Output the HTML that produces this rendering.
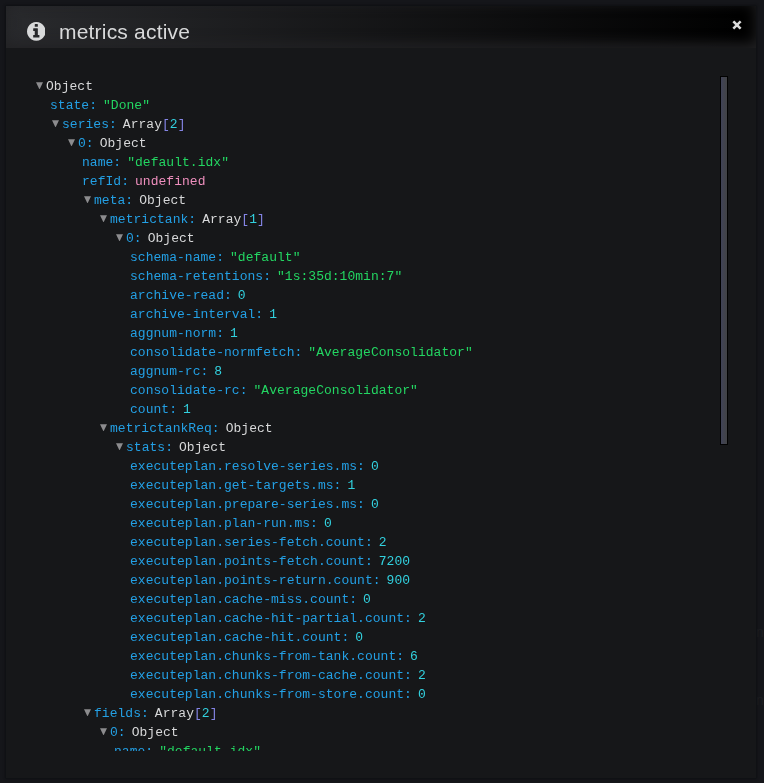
<!DOCTYPE html>
<html><head><meta charset="utf-8"><title>metrics active</title>
<style>
html,body{margin:0;padding:0;overflow:hidden;background:#15161a;}
body{width:764px;height:783px;overflow:hidden;background:#15161a;position:relative;font-family:"Liberation Sans",sans-serif;}
.modal{position:absolute;left:6px;top:6px;width:750px;height:772px;background:#161719;box-shadow:0 0 2px 1px #0e0f12;}
.hdr{position:absolute;left:0;top:0;width:750px;height:42px;background:linear-gradient(90deg,#292a2d,#000);box-shadow:inset 0 -4px 14px #222224;}
.title{will-change:transform;position:absolute;left:53px;top:11.7px;font-size:21px;line-height:28px;letter-spacing:0.2px;color:#d8d9da;white-space:nowrap;}
.icon{position:absolute;left:20.5px;top:16.1px;width:18.6px;height:18.8px;}
.close{position:absolute;left:724.7px;top:12.5px;width:12px;height:12px;}
.json{position:absolute;left:0;top:71px;will-change:transform;width:712px;height:673.6px;overflow:hidden;font-family:"Liberation Mono",monospace;font-size:13px;line-height:19px;color:#d8d9da;letter-spacing:0.03px;}
.r{height:19px;white-space:pre;transform:scaleY(1.035);transform-origin:0 13px;}
.t{display:inline-block;width:7px;height:7px;background:#8c8c8e;clip-path:polygon(0 0,100% 0,50% 100%);margin-right:3px;vertical-align:0.6px;}
.k{color:#23a0e5;margin-right:6px;}
.o{color:#d8d9da;}
.s{color:#23d662;}
.n{color:#32d1df;}
.b{color:#8585e6;}
.u{color:#ef8fbe;}
.ghost{position:absolute;left:756px;font-size:14px;line-height:14px;color:#1d1e22;white-space:nowrap;}
.sb{position:absolute;left:714px;top:70px;width:8px;height:369px;background:linear-gradient(90deg,#404357,#424345);border:1px solid #010101;box-sizing:border-box;}
</style></head><body>
<div style="position:absolute;left:0;top:0;width:764px;height:783px;overflow:hidden"><div class="ghost" style="top:625px">ns</div><div class="ghost" style="top:693px">ns</div></div>
<div class="modal">
<div class="hdr">
<svg class="icon" viewBox="128 128 1536 1536"><path fill="#d8d9da" d="M1152 1376v-160q0-14-9-23t-23-9h-96v-512q0-14-9-23t-23-9h-320q-14 0-23 9t-9 23v160q0 14 9 23t23 9h96v320h-96q-14 0-23 9t-9 23v160q0 14 9 23t23 9h448q14 0 23-9t9-23zm-128-896v-160q0-14-9-23t-23-9h-192q-14 0-23 9t-9 23v160q0 14 9 23t23 9h192q14 0 23-9t9-23zm640 416q0 209-103 385.5t-279.5 279.5-385.5 103-385.5-103-279.5-279.5-103-385.5 103-385.5 279.5-279.5 385.5-103 385.5 103 279.5 279.5 103 385.5z"/></svg>
<div class="title">metrics active</div>
<svg class="close" viewBox="0 0 12 12"><path d="M3.2 3.2L8.8 8.8M8.8 3.2L3.2 8.8" stroke="#dcdcdc" stroke-width="2.5" stroke-linecap="square"/></svg>
</div>
<div class="json">
<div class="r" style="padding-left:30px"><i class="t"></i><span class="o">Object</span></div>
<div class="r" style="padding-left:44px"><span class="k">state:</span><span class="s">"Done"</span></div>
<div class="r" style="padding-left:46px"><i class="t"></i><span class="k">series:</span><span class="o">Array</span><span class="b">[</span><span class="n">2</span><span class="b">]</span></div>
<div class="r" style="padding-left:62px"><i class="t"></i><span class="k">0:</span><span class="o">Object</span></div>
<div class="r" style="padding-left:76px"><span class="k">name:</span><span class="s">"default.idx"</span></div>
<div class="r" style="padding-left:76px"><span class="k">refId:</span><span class="u">undefined</span></div>
<div class="r" style="padding-left:78px"><i class="t"></i><span class="k">meta:</span><span class="o">Object</span></div>
<div class="r" style="padding-left:94px"><i class="t"></i><span class="k">metrictank:</span><span class="o">Array</span><span class="b">[</span><span class="n">1</span><span class="b">]</span></div>
<div class="r" style="padding-left:110px"><i class="t"></i><span class="k">0:</span><span class="o">Object</span></div>
<div class="r" style="padding-left:124px"><span class="k">schema-name:</span><span class="s">"default"</span></div>
<div class="r" style="padding-left:124px"><span class="k">schema-retentions:</span><span class="s">"1s:35d:10min:7"</span></div>
<div class="r" style="padding-left:124px"><span class="k">archive-read:</span><span class="n">0</span></div>
<div class="r" style="padding-left:124px"><span class="k">archive-interval:</span><span class="n">1</span></div>
<div class="r" style="padding-left:124px"><span class="k">aggnum-norm:</span><span class="n">1</span></div>
<div class="r" style="padding-left:124px"><span class="k">consolidate-normfetch:</span><span class="s">"AverageConsolidator"</span></div>
<div class="r" style="padding-left:124px"><span class="k">aggnum-rc:</span><span class="n">8</span></div>
<div class="r" style="padding-left:124px"><span class="k">consolidate-rc:</span><span class="s">"AverageConsolidator"</span></div>
<div class="r" style="padding-left:124px"><span class="k">count:</span><span class="n">1</span></div>
<div class="r" style="padding-left:94px"><i class="t"></i><span class="k">metrictankReq:</span><span class="o">Object</span></div>
<div class="r" style="padding-left:110px"><i class="t"></i><span class="k">stats:</span><span class="o">Object</span></div>
<div class="r" style="padding-left:124px"><span class="k">executeplan.resolve-series.ms:</span><span class="n">0</span></div>
<div class="r" style="padding-left:124px"><span class="k">executeplan.get-targets.ms:</span><span class="n">1</span></div>
<div class="r" style="padding-left:124px"><span class="k">executeplan.prepare-series.ms:</span><span class="n">0</span></div>
<div class="r" style="padding-left:124px"><span class="k">executeplan.plan-run.ms:</span><span class="n">0</span></div>
<div class="r" style="padding-left:124px"><span class="k">executeplan.series-fetch.count:</span><span class="n">2</span></div>
<div class="r" style="padding-left:124px"><span class="k">executeplan.points-fetch.count:</span><span class="n">7200</span></div>
<div class="r" style="padding-left:124px"><span class="k">executeplan.points-return.count:</span><span class="n">900</span></div>
<div class="r" style="padding-left:124px"><span class="k">executeplan.cache-miss.count:</span><span class="n">0</span></div>
<div class="r" style="padding-left:124px"><span class="k">executeplan.cache-hit-partial.count:</span><span class="n">2</span></div>
<div class="r" style="padding-left:124px"><span class="k">executeplan.cache-hit.count:</span><span class="n">0</span></div>
<div class="r" style="padding-left:124px"><span class="k">executeplan.chunks-from-tank.count:</span><span class="n">6</span></div>
<div class="r" style="padding-left:124px"><span class="k">executeplan.chunks-from-cache.count:</span><span class="n">2</span></div>
<div class="r" style="padding-left:124px"><span class="k">executeplan.chunks-from-store.count:</span><span class="n">0</span></div>
<div class="r" style="padding-left:78px"><i class="t"></i><span class="k">fields:</span><span class="o">Array</span><span class="b">[</span><span class="n">2</span><span class="b">]</span></div>
<div class="r" style="padding-left:94px"><i class="t"></i><span class="k">0:</span><span class="o">Object</span></div>
<div class="r" style="padding-left:108px"><span class="k">name:</span><span class="s">"default.idx"</span></div>
</div>
<div class="sb"></div>
</div>
</body></html>
